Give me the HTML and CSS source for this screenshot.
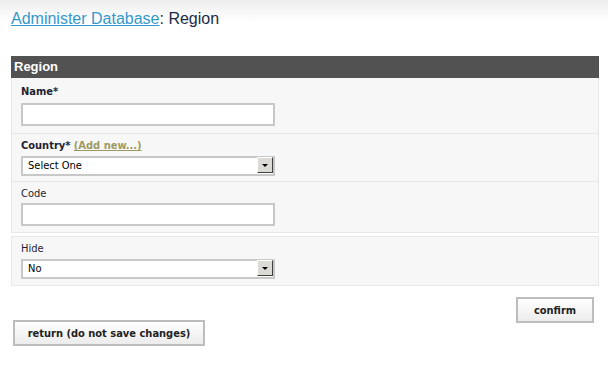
FILE: index.html
```html
<!DOCTYPE html>
<html lang="en">
<head>
  <meta charset="UTF-8" />
  <title>Administer Database: Region</title>
  <link rel="stylesheet" href="styles.css">
</head>
<body>
  <div class="page">
    <h1><a href="#">Administer Database</a>: Region</h1>

    <form class="edit-form">
      <div class="form-head">Region</div>
      <div class="fields">
        <div class="field first">
          <label class="req">Name*</label>
          <input type="text" class="text" />
        </div>
        <div class="field">
          <label class="req">Country* <a href="#" class="add-new">(Add new...)</a></label>
          <div class="select">
            <select><option>Select One</option></select>
            <span class="arrow"></span>
          </div>
        </div>
        <div class="field">
          <label>Code</label>
          <input type="text" class="text" />
        </div>
      </div>
      <div class="fields">
        <div class="field">
          <label>Hide</label>
          <div class="select">
            <select><option>No</option></select>
            <span class="arrow"></span>
          </div>
        </div>
      </div>

      <div class="actions">
        <button type="button" class="btn">confirm</button>
      </div>
      <button type="button" class="btn btn-return">return (do not save changes)</button>
    </form>
  </div>
</body>
</html>
```

FILE: styles.css
```css
body {
  margin: 0;
  font-family: "Liberation Sans", Arial, sans-serif;
  background: linear-gradient(#eeeeee, #ffffff 22px) no-repeat;
  background-color: #fff;
}
.page {
  padding: 9px 9px 0 11px;
}
h1 {
  margin: 0;
  font-size: 16px;
  line-height: 20px;
  font-weight: normal;
  color: #1c2b46;
}
h1 a {
  color: #3399cc;
}
.edit-form {
  margin-top: 27px;
}
.form-head {
  background: #525252;
  color: #fff;
  font-weight: bold;
  font-size: 13px;
  line-height: 22px;
  padding-left: 3px;
}
.fields {
  border: 1px solid #e8e8e8;
  border-top: none;
  background: #f7f7f7;
  margin-bottom: 3px;
}
.fields + .fields {
  border-top: 1px solid #e8e8e8;
}
.field {
  padding: 5px 9px 6px 9px;
  border-top: 1px solid #e8e8e8;
}
.field.first {
  border-top: none;
  padding-top: 7px;
  padding-bottom: 7px;
}
.field.first label {
  margin-bottom: 4px;
}
.fields + .fields .field {
  border-top: none;
  padding-bottom: 7px;
}
label {
  display: block;
  font-family: "DejaVu Sans Condensed", "DejaVu Sans", sans-serif;
  font-size: 11px;
  line-height: 14px;
  color: #1f1f33;
  margin-bottom: 2px;
}
label.req {
  font-weight: bold;
}
.add-new {
  color: #9c9a63;
}
.text {
  display: block;
  box-sizing: border-box;
  width: 254px;
  height: 23px;
  border: 2px solid #c8c8c8;
  background: #fff;
  margin: 0;
}
.select {
  position: relative;
  width: 254px;
  height: 20px;
}
.select select {
  appearance: none;
  -webkit-appearance: none;
  box-sizing: border-box;
  width: 100%;
  height: 100%;
  border: 2px solid #c8c8c8;
  border-radius: 0;
  background: #fff;
  padding: 0 0 0 5px;
  margin: 0;
  font-family: "DejaVu Sans Condensed", "DejaVu Sans", sans-serif;
  font-size: 11px;
  color: #000;
}
.select .arrow {
  position: absolute;
  top: 2px;
  right: 2px;
  width: 14px;
  height: 14px;
  background: #dcdad4;
  border-top: 1px solid #fff;
  border-left: 1px solid #fff;
  border-right: 1px solid #404040;
  border-bottom: 1px solid #404040;
}
.select .arrow::after {
  content: "";
  position: absolute;
  left: 4px;
  top: 6px;
  border-left: 3px solid transparent;
  border-right: 3px solid transparent;
  border-top: 3px solid #000;
}
.actions {
  display: flex;
  justify-content: flex-end;
  padding: 8px 5px 0 0;
}
.btn {
  box-sizing: border-box;
  height: 26px;
  border: 2px solid #bdbdbd;
  background: linear-gradient(#ffffff, #ececec);
  font-family: "DejaVu Sans Condensed", "DejaVu Sans", sans-serif;
  font-weight: bold;
  font-size: 11px;
  color: #222;
  padding: 0;
  width: 78px;
}
.btn-return {
  display: block;
  width: 192px;
  margin: -3px 0 0 2px;
}
```
